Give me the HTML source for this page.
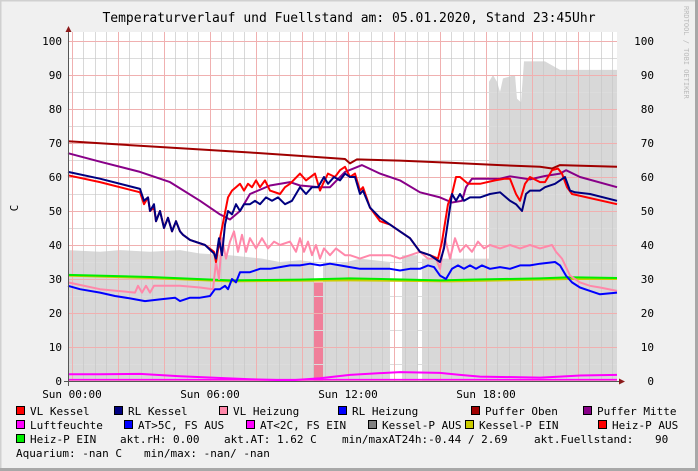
<!DOCTYPE html>
<html><head><meta charset="utf-8"><style>
html,body{margin:0;padding:0;background:#f0f0f0;}
svg{display:block;}
text{font-family:"DejaVu Sans Mono","Liberation Mono",monospace;}
</style></head><body>
<svg width="698" height="471" viewBox="0 0 698 471" xmlns="http://www.w3.org/2000/svg">
<rect x="0" y="0" width="698" height="471" fill="#f0f0f0"/>
<rect x="0.5" y="0.5" width="697" height="470" fill="none" stroke="#d0d0d0" stroke-width="2"/>
<rect x="695" y="0" width="3" height="471" fill="#a8a8a8"/>
<rect x="0" y="468" width="698" height="3" fill="#a8a8a8"/>
<text x="349" y="22" font-size="13" text-anchor="middle" fill="#000">Temperaturverlauf und Fuellstand am: 05.01.2020, Stand 23:45Uhr</text>
<text transform="translate(684,6) rotate(90)" font-size="7" fill="#bbb">RRDTOOL / TOBI OETIKER</text>
<rect x="68" y="32" width="549" height="349" fill="#fff"/>
<g transform="translate(0,381) scale(1,-3.4)">
<polygon fill="#d8d8d8" points="68,0 68,38.5 100,38 120,38.5 150,38 180,38.5 200,37.5 230,37 262,36 280,35 300,35.5 314,35 314,0 323,0 323,35 340,34.5 360,36 390,35 390,0 402,0 402,37 418,37 418,0 422,0 422,36 460,36 489,36 489,88 493,90 497,88 500,85 503,89 515,90 517,83 521,82 524,94 545,94 560,91.5 580,91.5 617,91.5 617,0"/>
<rect x="314" y="0" width="9" height="29" fill="#f07f9a"/>
</g>
<g stroke="#dcdcdc" stroke-width="1">
<line x1="68" y1="364.5" x2="617" y2="364.5"/><line x1="68" y1="330.5" x2="617" y2="330.5"/><line x1="68" y1="296.5" x2="617" y2="296.5"/><line x1="68" y1="262.5" x2="617" y2="262.5"/><line x1="68" y1="228.5" x2="617" y2="228.5"/><line x1="68" y1="194.5" x2="617" y2="194.5"/><line x1="68" y1="160.5" x2="617" y2="160.5"/><line x1="68" y1="126.5" x2="617" y2="126.5"/><line x1="68" y1="92.5" x2="617" y2="92.5"/><line x1="68" y1="58.5" x2="617" y2="58.5"/>
</g>
<g stroke="#c8c8c8" stroke-width="1" opacity="0.7">
<line x1="83.5" y1="32" x2="83.5" y2="381"/><line x1="95.5" y1="32" x2="95.5" y2="381"/><line x1="106.5" y1="32" x2="106.5" y2="381"/><line x1="129.5" y1="32" x2="129.5" y2="381"/><line x1="141.5" y1="32" x2="141.5" y2="381"/><line x1="152.5" y1="32" x2="152.5" y2="381"/><line x1="175.5" y1="32" x2="175.5" y2="381"/><line x1="187.5" y1="32" x2="187.5" y2="381"/><line x1="198.5" y1="32" x2="198.5" y2="381"/><line x1="221.5" y1="32" x2="221.5" y2="381"/><line x1="233.5" y1="32" x2="233.5" y2="381"/><line x1="244.5" y1="32" x2="244.5" y2="381"/><line x1="267.5" y1="32" x2="267.5" y2="381"/><line x1="279.5" y1="32" x2="279.5" y2="381"/><line x1="290.5" y1="32" x2="290.5" y2="381"/><line x1="313.5" y1="32" x2="313.5" y2="381"/><line x1="325.5" y1="32" x2="325.5" y2="381"/><line x1="336.5" y1="32" x2="336.5" y2="381"/><line x1="359.5" y1="32" x2="359.5" y2="381"/><line x1="371.5" y1="32" x2="371.5" y2="381"/><line x1="382.5" y1="32" x2="382.5" y2="381"/><line x1="405.5" y1="32" x2="405.5" y2="381"/><line x1="417.5" y1="32" x2="417.5" y2="381"/><line x1="428.5" y1="32" x2="428.5" y2="381"/><line x1="451.5" y1="32" x2="451.5" y2="381"/><line x1="463.5" y1="32" x2="463.5" y2="381"/><line x1="474.5" y1="32" x2="474.5" y2="381"/><line x1="497.5" y1="32" x2="497.5" y2="381"/><line x1="509.5" y1="32" x2="509.5" y2="381"/><line x1="520.5" y1="32" x2="520.5" y2="381"/><line x1="543.5" y1="32" x2="543.5" y2="381"/><line x1="555.5" y1="32" x2="555.5" y2="381"/><line x1="566.5" y1="32" x2="566.5" y2="381"/><line x1="589.5" y1="32" x2="589.5" y2="381"/><line x1="601.5" y1="32" x2="601.5" y2="381"/><line x1="612.5" y1="32" x2="612.5" y2="381"/>
</g>
<g stroke="#f0b0b0" stroke-width="1">
<line x1="68" y1="347.5" x2="617" y2="347.5"/><line x1="68" y1="313.5" x2="617" y2="313.5"/><line x1="68" y1="279.5" x2="617" y2="279.5"/><line x1="68" y1="245.5" x2="617" y2="245.5"/><line x1="68" y1="211.5" x2="617" y2="211.5"/><line x1="68" y1="177.5" x2="617" y2="177.5"/><line x1="68" y1="143.5" x2="617" y2="143.5"/><line x1="68" y1="109.5" x2="617" y2="109.5"/><line x1="68" y1="75.5" x2="617" y2="75.5"/><line x1="68" y1="41.5" x2="617" y2="41.5"/>
<line x1="72.5" y1="32" x2="72.5" y2="381"/><line x1="118.5" y1="32" x2="118.5" y2="381"/><line x1="164.5" y1="32" x2="164.5" y2="381"/><line x1="210.5" y1="32" x2="210.5" y2="381"/><line x1="256.5" y1="32" x2="256.5" y2="381"/><line x1="302.5" y1="32" x2="302.5" y2="381"/><line x1="348.5" y1="32" x2="348.5" y2="381"/><line x1="394.5" y1="32" x2="394.5" y2="381"/><line x1="440.5" y1="32" x2="440.5" y2="381"/><line x1="486.5" y1="32" x2="486.5" y2="381"/><line x1="532.5" y1="32" x2="532.5" y2="381"/><line x1="578.5" y1="32" x2="578.5" y2="381"/>
</g>
<g transform="translate(0,381) scale(1,-3.4)" fill="none" stroke-width="2" stroke-linejoin="round">
<polyline vector-effect="non-scaling-stroke" stroke="#ff00ff" stroke-width="1.5" points="68,0.4 617,0.4"/>
<polyline vector-effect="non-scaling-stroke" stroke="#ff88aa" stroke-width="1" points="68,0 617,0"/>
<polyline vector-effect="non-scaling-stroke" stroke="#ff00ff" points="68,2 100,2 140,2.1 180,1.4 250,0.5 290,0.2 320,0.8 350,1.8 380,2.3 400,2.6 440,2.4 460,1.8 480,1.3 520,1.1 540,1 560,1.3 580,1.6 617,1.8"/>
<polyline vector-effect="non-scaling-stroke" stroke="#cccc00" points="68,31 150,30.3 230,29.3 350,29.6 450,29.3 540,29.8 570,30 617,30"/>
<polyline vector-effect="non-scaling-stroke" stroke="#00ee00" points="68,31.2 150,30.6 230,29.6 300,29.8 350,30.2 440,29.6 470,29.8 540,30.2 570,30.5 617,30.3"/>
<polyline vector-effect="non-scaling-stroke" stroke="#ff88aa" points="68,29 100,27 135,26 138,28 142,26 146,28 150,26 154,28 160,28 180,28 200,27.5 213,27 216,35 219,30 222,42 226,36 230,41 234,44 238,38 242,43 246,38 250,42 256,39 262,42 268,39 274,41 280,40 290,41 296,38 300,42 304,38 308,41 312,37 316,40 320,36 324,39 330,37 336,39 345,37 350,37 360,36 370,37 390,37 400,36 410,37 420,38 428,36 436,36 440,33 445,42 450,36 455,42 460,38 466,40 472,38 478,41 484,39 490,40 500,39 510,40 520,39 530,40 540,39 552,40 556,38 562,36 570,31 580,29 590,28 600,27.5 617,26.5"/>
<polyline vector-effect="non-scaling-stroke" stroke="#0000ff" points="68,28 80,27 100,26 115,25 130,24.3 145,23.5 160,24 175,24.5 180,23.5 190,24.5 200,24.5 210,25 215,27 220,27 225,28 228,27 232,30 236,29 240,32 250,32 260,33 270,33 280,33.5 290,34 300,34 310,34.5 320,34 330,34.5 340,34 350,33.5 360,33 370,33 380,33 390,33 400,32.5 410,33 420,33 428,34 434,33.5 440,31 446,30 452,33 458,34 464,33 470,34 476,33 482,34 490,33 500,33.5 510,33 520,34 530,34 540,34.5 555,35 560,34 566,31 572,29 580,27.5 590,26.5 600,25.5 617,26"/>
<polyline vector-effect="non-scaling-stroke" stroke="#a00000" points="68,70.5 150,69 250,67.2 300,66.2 345,65.3 350,64 357,65.2 400,64.8 450,64.2 500,63.5 540,63 552,62.5 560,63.5 617,63"/>
<polyline vector-effect="non-scaling-stroke" stroke="#880088" points="68,67 100,64.5 140,61.5 170,58.5 200,53 220,49 230,47.5 240,50 250,55 270,57.5 290,58.5 300,57.5 320,57 330,57 345,61.5 362,63.5 380,61 400,59 420,55.5 440,54 452,52.5 462,53 466,57 472,59.5 500,59.5 510,60.2 530,59.3 545,60.3 560,61 566,62 580,60 617,57"/>
<polyline vector-effect="non-scaling-stroke" stroke="#ff0000" points="68,60.5 100,58.5 140,55.5 144,52 148,54 150,50 154,51 156,47 160,50 164,45 168,48 172,44 176,47 180,44 183,43 190,41.5 205,40 214,38 216,35 220,42 224,48 228,54 232,56 236,57 240,58 244,56 248,58 252,57 256,59 260,57 265,59 270,56 280,55 285,57 290,58 300,61 306,59 315,61 320,56 323,58 328,61 335,60 340,62 345,63 350,60 355,61 360,56 363,57 370,51 380,47 390,46 400,44 410,42 420,38 430,37 438,36 442,41 448,52 452,55 456,60 460,60 468,58 480,58 495,59 505,59.5 510,59.5 516,55 520,53 525,58 530,60 540,58.5 545,58.5 552,62 558,62.5 562,61 567,57 572,55 617,52"/>
<polyline vector-effect="non-scaling-stroke" stroke="#000080" points="68,61.5 100,59.5 140,56.5 144,53 148,54 150,50 154,52 156,47 160,50 164,45 168,48 172,44 176,47 180,44 183,43 190,41.5 205,40 214,37.5 216,36 219,42 222,37 225,46 228,50 232,49 236,52 240,50 244,52 250,52 255,53 260,52 266,54 272,53 278,54 285,52 292,53 300,57 306,55 312,57 318,57 324,60 328,58 334,60 340,59 345,61 350,60 355,60 360,55 363,56 370,51 380,48 390,46 400,44 410,42 420,38 430,37 440,35 444,39 448,47 452,55 456,53 460,55 464,53 470,54 480,54 490,55 500,55.5 510,53 516,52 522,50 526,55 530,56 540,56 545,57 555,58 560,59 565,60 570,56 575,55.5 590,55 617,53"/>
</g>
<line x1="68.5" y1="28" x2="68.5" y2="386" stroke="#555" stroke-width="1"/>
<line x1="64" y1="381.5" x2="622" y2="381.5" stroke="#555" stroke-width="1"/>
<polygon points="65.5,32 68.5,26 71.5,32" fill="#8b1a1a"/>
<polygon points="619,378.5 625,381.5 619,384.5" fill="#8b1a1a"/>
<g font-size="11" fill="#000">
<g text-anchor="end">
<text x="62" y="45">100</text><text x="62" y="79">90</text><text x="62" y="113">80</text><text x="62" y="147">70</text><text x="62" y="181">60</text><text x="62" y="215">50</text><text x="62" y="249">40</text><text x="62" y="283">30</text><text x="62" y="317">20</text><text x="62" y="351">10</text><text x="62" y="385">0</text>
<text x="654" y="45">100</text><text x="654" y="79">90</text><text x="654" y="113">80</text><text x="654" y="147">70</text><text x="654" y="181">60</text><text x="654" y="215">50</text><text x="654" y="249">40</text><text x="654" y="283">30</text><text x="654" y="317">20</text><text x="654" y="351">10</text><text x="654" y="385">0</text>
</g>
<text transform="translate(18,208) rotate(-90)" text-anchor="middle">C</text>
<g text-anchor="middle">
<text x="72" y="398">Sun 00:00</text><text x="210" y="398">Sun 06:00</text><text x="348" y="398">Sun 12:00</text><text x="486" y="398">Sun 18:00</text>
</g>
</g>
<g stroke="#000" stroke-width="1">
<rect x="16.5" y="406.5" width="8" height="8" fill="#ff0000"/>
<rect x="114.5" y="406.5" width="8" height="8" fill="#000080"/>
<rect x="219.5" y="406.5" width="8" height="8" fill="#ff88aa"/>
<rect x="338.5" y="406.5" width="8" height="8" fill="#0000ff"/>
<rect x="471.5" y="406.5" width="8" height="8" fill="#a00000"/>
<rect x="583.5" y="406.5" width="8" height="8" fill="#880088"/>
<rect x="16.5" y="420.5" width="8" height="8" fill="#ff00ff"/>
<rect x="124.5" y="420.5" width="8" height="8" fill="#0000ff"/>
<rect x="246.5" y="420.5" width="8" height="8" fill="#ff00ff"/>
<rect x="368.5" y="420.5" width="8" height="8" fill="#808080"/>
<rect x="465.5" y="420.5" width="8" height="8" fill="#cccc00"/>
<rect x="598.5" y="420.5" width="8" height="8" fill="#ff0000"/>
<rect x="16.5" y="434.5" width="8" height="8" fill="#00ee00"/>
</g>
<g font-size="11" fill="#000">
<text x="30" y="415">VL Kessel</text>
<text x="128" y="415">RL Kessel</text>
<text x="233" y="415">VL Heizung</text>
<text x="352" y="415">RL Heizung</text>
<text x="485" y="415">Puffer Oben</text>
<text x="597" y="415">Puffer Mitte</text>
<text x="30" y="429">Luftfeuchte</text>
<text x="138" y="429">AT&gt;5C, FS AUS</text>
<text x="260" y="429">AT&lt;2C, FS EIN</text>
<text x="382" y="429">Kessel-P AUS</text>
<text x="479" y="429">Kessel-P EIN</text>
<text x="612" y="429">Heiz-P AUS</text>
<text x="30" y="443">Heiz-P EIN</text>
<text x="120" y="443">akt.rH: 0.00</text>
<text x="224" y="443">akt.AT: 1.62 C</text>
<text x="342" y="443">min/maxAT24h:-0.44 / 2.69</text>
<text x="534" y="443">akt.Fuellstand:</text>
<text x="655" y="443">90</text>
<text x="16" y="457">Aquarium: -nan C</text>
<text x="144" y="457">min/max: -nan/ -nan</text>
</g>
</svg>
</body></html>
